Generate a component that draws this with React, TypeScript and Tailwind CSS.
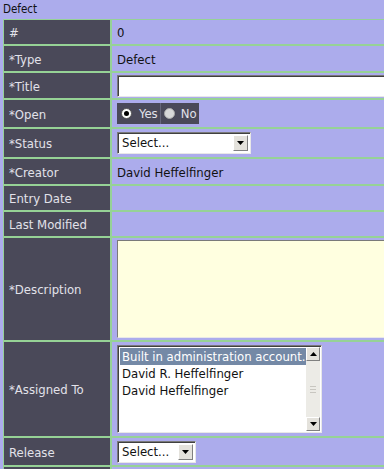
import type { ReactNode } from 'react'

const font = { fontFamily: '"DejaVu Sans Condensed", "DejaVu Sans", Verdana, sans-serif', fontStretch: 'condensed' }

function Arrow({ up = false }: { up?: boolean }) {
  return (
    <svg width="7" height="4" viewBox="0 0 7 4" className={up ? 'rotate-180' : ''}>
      <path d="M0 0h7L3.5 4z" fill="#000" />
    </svg>
  )
}

function FakeSelect({ width }: { width: string }) {
  return (
    <div className={`${width} h-[22px] flex items-stretch bg-white border border-t-[#7a7a7a] border-l-[#7a7a7a] border-b-[#e8e8e8] border-r-[#e8e8e8] shadow-[inset_1px_1px_0_#404040]`}>
      <span className="flex-1 pl-[4px] flex items-center text-[#111]">Select...</span>
      <span className="w-[15px] my-[2px] mr-[2px] bg-[#e4e2dc] border border-t-white border-l-white border-b-[#808080] border-r-[#808080] flex items-center justify-center">
        <Arrow />
      </span>
    </div>
  )
}

function Row({ label, h, children }: { label: string; h: string; children?: ReactNode }) {
  return (
    <>
      <div className={`${h} bg-[#4a4959] text-[#e2e2ea] pl-[5px] pt-[2px] flex items-center`}>{label}</div>
      <div className={`${h} bg-[#acacec] text-[#111] pl-[5px] flex items-center`}>{children}</div>
    </>
  )
}

export default function App() {
  return (
    <div className="w-[384px] h-[469px] overflow-hidden bg-[#acacec]" style={font}>
      <div className="h-[19px] pl-[3px] flex items-center text-[11.5px] text-[#111]">Defect</div>
      <div className="ml-[3px] w-[560px] grid grid-cols-[106px_1fr] gap-[2px] p-[1px] bg-[#96d296] text-[13px]">
        <Row label="#" h="h-[24px]"><span className="pt-[2px]">0</span></Row>
        <Row label="*Type" h="h-[25px]"><span className="pt-[2px]">Defect</span></Row>
        <Row label="*Title" h="h-[25px]">
          <div className="w-[440px] h-[22px] bg-white border border-t-[#7a7a7a] border-l-[#7a7a7a] border-b-[#e8e8e8] border-r-[#e8e8e8] shadow-[inset_1px_1px_0_#404040]" />
        </Row>
        <Row label="*Open" h="h-[27px]">
          <div className="h-[21px] flex bg-[#4a4959] text-[#e2e2ea]">
            <span className="flex items-center pl-[4px] pr-[2px] gap-[7px] border-r border-[#66667a]">
              <span className="w-[11px] h-[11px] rounded-full bg-white border border-[#555] flex items-center justify-center">
                <span className="w-[5px] h-[5px] rounded-full bg-black" />
              </span>
              <span className="pt-[1px]">Yes</span>
            </span>
            <span className="flex items-center pl-[3px] pr-[2px] gap-[6px]">
              <span className="w-[11px] h-[11px] rounded-full bg-[#d8d8d8] border border-[#a8a8a8]" />
              <span className="pt-[1px]">No</span>
            </span>
          </div>
        </Row>
        <Row label="*Status" h="h-[28px]">
          <FakeSelect width="w-[134px]" />
        </Row>
        <Row label="*Creator" h="h-[25px]"><span className="pt-[2px]">David Heffelfinger</span></Row>
        <Row label="Entry Date" h="h-[24px]" />
        <Row label="Last Modified" h="h-[24px]" />
        <Row label="*Description" h="h-[102px]">
          <div className="w-[440px] h-[98px] bg-[#ffffe0] border border-t-[#7a7a7a] border-l-[#7a7a7a] border-b-[#e8e8e8] border-r-[#e8e8e8]" />
        </Row>
        <Row label="*Assigned To" h="h-[94px]">
          <div className="w-[205px] h-[88px] flex bg-white border border-t-[#7a7a7a] border-l-[#7a7a7a] border-b-[#e8e8e8] border-r-[#e8e8e8] shadow-[inset_1px_1px_0_#404040]">
            <div className="flex-1 pt-[2px] pl-[2px] leading-[17px]">
              <div className="bg-[#7489a6] text-white pl-[2px]">Built in administration account.</div>
              <div className="pl-[2px]">David R. Heffelfinger</div>
              <div className="pl-[2px]">David Heffelfinger</div>
            </div>
            <div className="w-[14px] my-[1px] mr-[1px] bg-[#ecebe6] flex flex-col justify-between">
              <span className="h-[14px] bg-[#e4e2dc] border border-t-white border-l-white border-b-[#808080] border-r-[#808080] flex items-center justify-center">
                <Arrow up />
              </span>
              <span className="flex flex-col items-center gap-[2px]">
                <span className="w-[6px] h-px bg-[#c8c6c0]" />
                <span className="w-[6px] h-px bg-[#c8c6c0]" />
                <span className="w-[6px] h-px bg-[#c8c6c0]" />
              </span>
              <span className="h-[14px] bg-[#e4e2dc] border border-t-white border-l-white border-b-[#808080] border-r-[#808080] flex items-center justify-center">
                <Arrow />
              </span>
            </div>
          </div>
        </Row>
        <Row label="Release" h="h-[27px]">
          <FakeSelect width="w-[79px]" />
        </Row>
        <Row label="" h="h-[24px]" />
      </div>
    </div>
  )
}
